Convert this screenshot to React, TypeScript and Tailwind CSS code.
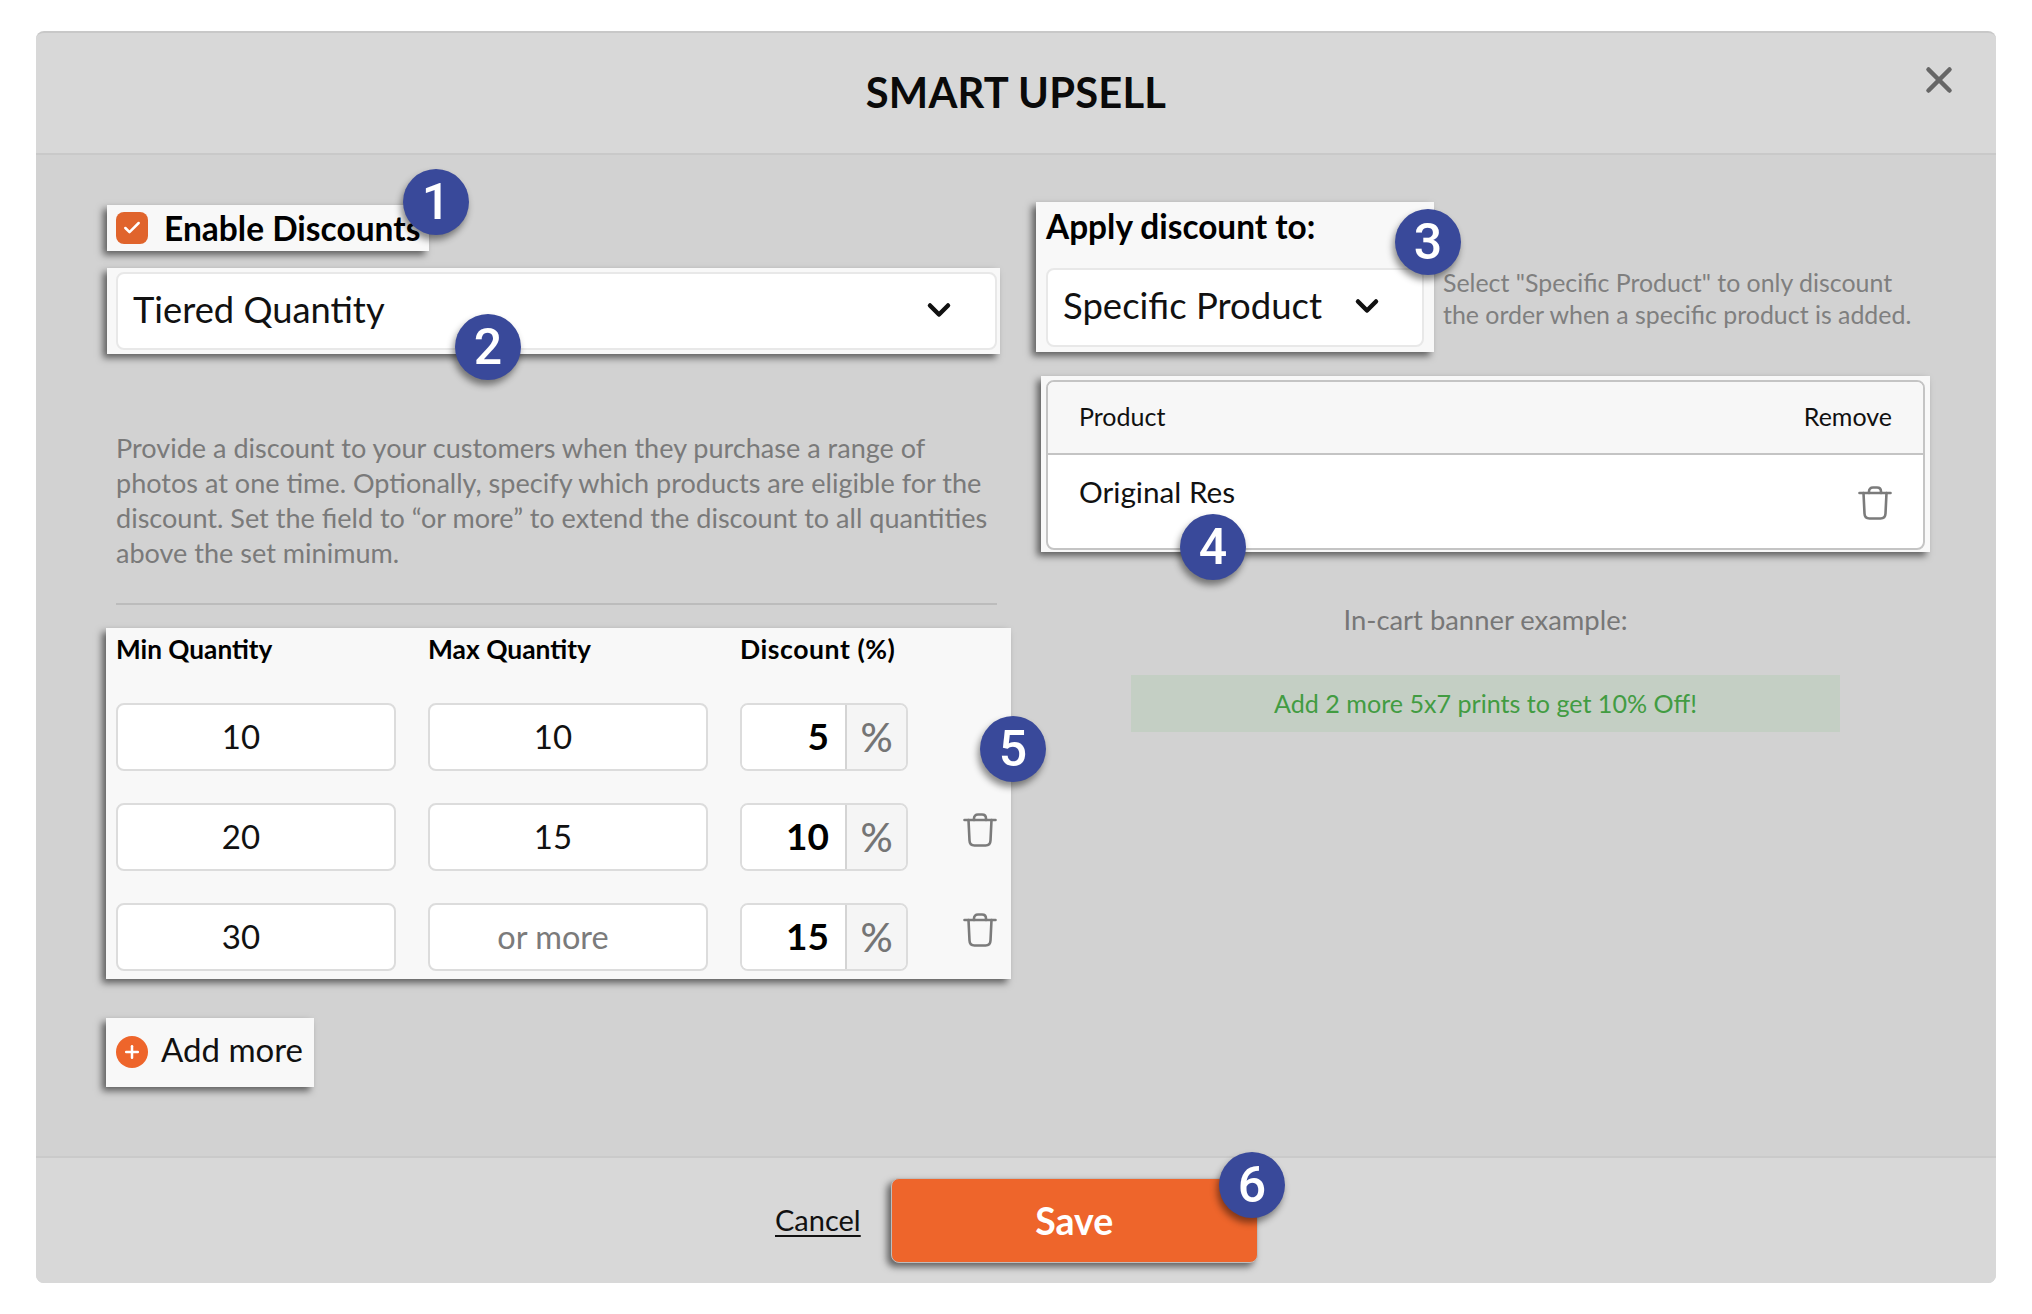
import { Check, ChevronDown, Plus, X } from "lucide-react";

const boxShadow = "shadow-[-4px_4px_7px_rgba(0,0,0,0.55)]";

const TrashIcon = () => (
  <svg className="w-[34px] h-[34px] text-[#7b7b7b]" viewBox="0 0 34 34" fill="none" stroke="currentColor" strokeWidth={2.6} strokeLinecap="round" strokeLinejoin="round">
    <path d="M1.5 7h31" />
    <path d="M11 7V5.5C11 3 12.5 1.5 15 1.5h4c2.500 0 4 1.500 4 4V7" />
    <path d="M5.500 7l1 20.500c.1 3 2 5 5 5h11c3 0 4.900-2 5-5l1-20.500" />
  </svg>
);

const Badge = ({ n, className }: { n: number; className: string }) => (
  <div className={`absolute z-10 w-[66px] h-[66px] rounded-full bg-[#39499a] text-white flex items-center justify-center text-[50px] font-medium font-['Roboto',sans-serif] shadow-[-2px_5px_7px_rgba(0,0,0,0.45)] ${className}`}>
    {n}
  </div>
);

const rows = [
  { min: "10", max: "10", discount: "5", removable: false },
  { min: "20", max: "15", discount: "10", removable: true },
  { min: "30", max: "", discount: "15", removable: true },
];

const inputBox = "h-[68px] bg-white rounded-lg border-2 border-[#dcdcdc]";

export default function App() {
  return (
    <div className="w-[2032px] h-[1314px] bg-white pt-[31px] pl-[36px] font-['Lato',sans-serif] text-black">
      <div className="relative w-[1960px] h-[1252px] flex flex-col rounded-lg overflow-hidden bg-[#d2d2d2] border-t-2 border-[#c8c8c8]">
        {/* Header */}
        <div className="relative h-[122px] shrink-0 bg-[#d8d8d8] border-b-2 border-[#c9c9c9] flex items-center justify-center">
          <h1 className="text-[41.700px] font-bold tracking-[0.2px] text-[#0a0a0a] mb-[2px]">SMART UPSELL</h1>
          <X className="absolute right-[36px] top-[26px] w-[42px] h-[42px] text-[#666666]" strokeWidth={2.6} />
        </div>

        {/* Body */}
        <div className="flex-1 flex pl-[70px] pt-[50px]">
          {/* Left column */}
          <div className="w-[905px] flex flex-col items-start">
            <div className={`ml-[1px] w-[322px] h-[46px] bg-[#f8f8f8] flex items-center pl-[9px] ${boxShadow}`}>
              <span className="w-[32px] h-[32px] rounded-lg bg-[#e0642c] flex items-center justify-center">
                <Check className="w-[20px] h-[20px] text-white" strokeWidth={3} />
              </span>
              <span className="ml-[16px] text-[33.500px] font-bold whitespace-nowrap">Enable Discounts</span>
            </div>

            <div className={`ml-[1px] mt-[17px] w-[893px] h-[86px] bg-[#f8f8f8] pl-[9px] pr-[3px] pt-[4px] pb-[4px] ${boxShadow}`}>
              <div className="h-full bg-white rounded-lg border-2 border-[#e8e8e8] flex items-center justify-between pl-[15px] pr-[40px]">
                <span className="text-[36.300px] text-[#111111] mb-[4px]">Tiered Quantity</span>
                <ChevronDown className="w-[36px] h-[36px] text-[#111111] mr-[-2px] mb-[3px]" strokeWidth={3} />
              </div>
            </div>

            <p className="mt-[76px] ml-[10px] w-[888px] text-[27.050px] leading-[35px] text-[#7a7a7a]">
              Provide a discount to your customers when they purchase a range of photos at one time. Optionally, specify which products are eligible for the discount. Set the field to “or more” to extend the discount to all quantities above the set minimum.
            </p>

            <div className="mt-[33px] ml-[10px] w-[881px] h-[2px] bg-[#bcbcbc]" />

            <div className={`mt-[23px] w-[905px] h-[351px] bg-[#f8f8f8] pl-[10px] ${boxShadow}`}>
              <div className="grid grid-cols-[312px_312px_1fr] h-[42px] items-center font-bold pt-[2px]">
                <span className="text-[26.200px]">Min Quantity</span>
                <span className="text-[26.400px]">Max Quantity</span>
                <span className="text-[26.600px] tracking-[0.55px]">Discount (%)</span>
              </div>
              <div className="mt-[33px] flex flex-col gap-[32px]">
                {rows.map((row) => (
                  <div key={row.min} className="flex items-start">
                    <div className={`w-[280px] mr-[32px] flex items-center justify-center pr-[30px] text-[33px] text-[#111111] ${inputBox}`}>{row.min}</div>
                    <div className={`w-[280px] mr-[32px] flex items-center justify-center pr-[30px] ${row.max ? "text-[33px] text-[#111111]" : "text-[32.500px] text-[#7b7b7b]"} ${inputBox}`}>{row.max || "or more"}</div>
                    <div className={`w-[168px] flex overflow-hidden ${inputBox}`}>
                      <span className="w-[103px] flex items-center justify-end pr-[16px] pb-[3px] text-[37px] font-bold bg-white">{row.discount}</span>
                      <span className="flex-1 border-l-2 border-[#d4d4d4] bg-[#f5f5f5] flex items-center justify-center text-[40px] font-medium text-[#757575]">%</span>
                    </div>
                    {row.removable && (
                      <div className="ml-[55px] mt-[10px]">
                        <TrashIcon />
                      </div>
                    )}
                  </div>
                ))}
              </div>
            </div>

            <div className={`mt-[39px] w-[208px] h-[69px] bg-[#f8f8f8] flex items-center pl-[10px] ${boxShadow}`}>
              <span className="w-[32px] h-[32px] rounded-full bg-[#ee652b] flex items-center justify-center mb-[2px]">
                <Plus className="w-[20px] h-[20px] text-white" strokeWidth={3} />
              </span>
              <span className="ml-[13px] text-[33px] text-[#111111] whitespace-nowrap mb-[6px]">Add more</span>
            </div>
          </div>

          {/* Right column */}
          <div className="ml-[25px] flex-1 flex flex-col items-start mt-[-3px]">
            <div className="flex items-start">
              <div className={`w-[398px] h-[150px] bg-[#f8f8f8] px-[10px] ${boxShadow}`}>
                <div className="h-[48px] flex items-center text-[33.400px] font-bold whitespace-nowrap">Apply discount to:</div>
                <div className="mt-[18px] h-[79px] bg-white rounded-lg border-2 border-[#e8e8e8] flex items-center pl-[15px]">
                  <span className="text-[36.500px] text-[#111111] whitespace-nowrap mb-[4px]">Specific Product</span>
                  <ChevronDown className="ml-[27px] w-[36px] h-[36px] text-[#111111] mb-[4px]" strokeWidth={3} />
                </div>
              </div>
              <p className="ml-[9px] mt-[64px] text-[24.900px] leading-[32px] text-[#7f7f7f] whitespace-nowrap">
                Select "Specific Product" to only discount
                <br />
                the order when a specific product is added.
              </p>
            </div>

            <div className={`mt-[24px] ml-[5px] w-[889px] h-[176px] bg-[#f8f8f8] pl-[5px] pr-[5px] pt-[4px] pb-[2px] ${boxShadow}`}>
              <div className="h-full rounded-lg border-2 border-[#c4c4c4] overflow-hidden bg-white">
                <div className="h-[73px] bg-[#f7f7f7] border-b-2 border-[#c4c4c4] flex items-center justify-between pl-[31px] pr-[31px] text-[25px] text-[#111111]">
                  <span className="mb-[2px]">Product</span>
                  <span className="mb-[2px]">Remove</span>
                </div>
                <div className="flex items-start justify-between pl-[31px] pr-[31px]">
                  <span className="mt-[19px] text-[29.700px] leading-[36px] text-[#111111]">Original Res</span>
                  <div className="mt-[31px]">
                    <TrashIcon />
                  </div>
                </div>
              </div>
            </div>

            <div className="mt-[50px] w-[899px] text-center text-[27.400px] leading-[36px] text-[#777777]">In-cart banner example:</div>
            <div className="mt-[37px] ml-[95px] w-[709px] h-[57px] bg-[#c4cfc4] flex items-center justify-center text-[25.100px] text-[#429c42]">
              Add 2 more 5x7 prints to get 10% Off!
            </div>
          </div>
        </div>

        {/* Footer */}
        <div className="relative h-[127px] shrink-0 bg-[#d8d8d8] border-t-2 border-[#cacaca] flex items-start pl-[739px] pt-[20px]">
          <a className="mt-[21px] text-[29px] leading-[42px] text-[#111111] underline underline-offset-4">Cancel</a>
          <button className={`ml-[30px] w-[367px] h-[85px] rounded-lg bg-[#ee652b] border border-[#bdbdbd] text-white text-[37.500px] font-bold pt-[1px] ${boxShadow}`}>Save</button>
        </div>

        <Badge n={1} className="left-[367px] top-[136px]" />
        <Badge n={2} className="left-[419px] top-[281px]" />
        <Badge n={3} className="left-[1359px] top-[176px]" />
        <Badge n={4} className="left-[1144px] top-[481px]" />
        <Badge n={5} className="left-[944px] top-[683px]" />
        <Badge n={6} className="left-[1183px] top-[1119px]" />
      </div>
    </div>
  );
}
